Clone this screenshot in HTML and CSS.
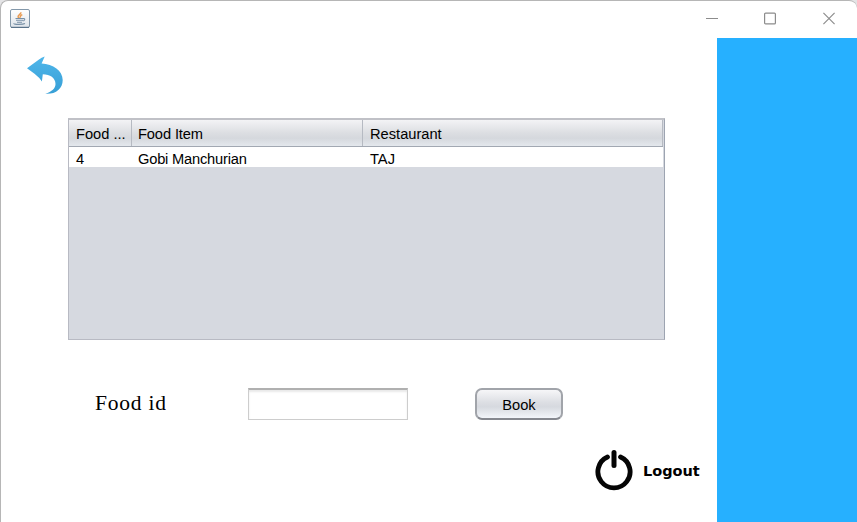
FILE: index.html
```html
<!DOCTYPE html>
<html lang="en">
<head>
<meta charset="utf-8">
<title>Food booking</title>
<link rel="stylesheet" href="styles.css">
</head>
<body>
<div class="window">
  <header class="titlebar">
    <svg class="java" width="20" height="20" viewBox="0 0 20 20">
      <defs><linearGradient id="tile" x1="0" y1="0" x2="0" y2="1"><stop offset="0" stop-color="#fff"/><stop offset="1" stop-color="#dde3e9"/></linearGradient></defs>
      <rect x=".5" y=".5" width="19" height="18" rx="1.5" fill="url(#tile)" stroke="#8398aa"/>
      <path d="M1 18.3h18" stroke="#506b82"/>
      <path d="M10.800 3.200c.8 2-3.500 2.700-2.700 4.700.2.500.8.900 1.200 1.400M12.300 5.600c-2 1-2.500 1.800-1.600 2.900" fill="none" stroke="#e99a50" stroke-width="1.500"/>
      <path d="M5.500 9.500h8M6 11.300h7M7 13.200h5M13.300 9.800c2-.7 2 1.700-.5 2.200M4 14.400c-1 1.300 9 1.300 11 .2" fill="none" stroke="#7890a6" stroke-width="1.100"/>
    </svg>
    <div class="controls">
      <svg width="12" height="13" viewBox="0 0 12 13"><path d="M0 6.500h12"/></svg>
      <svg width="12" height="13" viewBox="0 0 12 13"><rect x=".6" y="1.100" width="10.800" height="10.800" rx="1"/></svg>
      <svg width="12" height="13" viewBox="0 0 12 13"><path d="M.4.900l11.200 11.200M11.600.900L.4 12.100"/></svg>
    </div>
  </header>
  <div class="content">
    <main class="panel">
      <svg class="back" width="38" height="40" viewBox="0 0 38 40">
        <defs><linearGradient id="arrow" x1="0" y1="0" x2="0" y2="1"><stop offset="0" stop-color="#4fb6ea"/><stop offset="1" stop-color="#379fd6"/></linearGradient></defs>
        <path d="M1 12.300L13 3.600Q15.500 1.300 18.700.500L15.600 7.400C27 7.800 36.700 14.500 36.700 24C36.700 33 29.500 38.500 19.300 37.800C26 35.500 29.500 32.500 29.500 28C29.500 22 24 18.300 16.800 18.300L15.900 25.500Q13.500 21.500 8.500 17.700Z" fill="url(#arrow)"/>
      </svg>
      <section class="grid">
        <div class="row head"><span>Food ...</span><span>Food Item</span><span>Restaurant</span></div>
        <div class="row item"><span>4</span><span>Gobi Manchurian</span><span>TAJ</span></div>
      </section>
      <div class="form">
        <label for="food-id">Food id</label>
        <input id="food-id" type="text">
        <button type="button" class="book">Book</button>
      </div>
      <div class="logout">
        <svg width="38" height="42" viewBox="0 0 38 42"><path d="M12.500 8A16.100 16.100 0 1 0 25.500 8" fill="none" stroke="#050505" stroke-width="4.800" stroke-linecap="round"/><path d="M19 3.500V16.500" stroke="#050505" stroke-width="5" stroke-linecap="round"/></svg>
        <span>Logout</span>
      </div>
    </main>
    <aside class="side"></aside>
  </div>
</div>
</body>
</html>
```
FILE: styles.css
```css
* { box-sizing: border-box; }
body { margin: 0; background: #e4e4e6; overflow: hidden; font-family: "Liberation Sans", Arial, sans-serif; }
.window { width: 857px; height: 522px; border: solid #b6b6b6; border-width: 1px 0 0 1px; border-radius: 8px 8px 0 0; background: #fff; overflow: hidden; display: flex; flex-direction: column; }
.titlebar { height: 37px; flex: none; display: flex; justify-content: space-between; padding: 8px 22px 0 9px; }
.controls { display: flex; padding-top: 3px; }
.controls svg { fill: none; stroke: #8c8c8c; stroke-width: 1.200; }
.controls svg:nth-child(2) { margin: 0 47px 0 46px; }
.content { flex: 1; display: flex; }
.panel { width: 716px; display: flex; flex-direction: column; align-items: flex-start; }
.side { flex: 1; background: #26b0ff; }
.back { margin: 18px 0 0 25px; }
.grid { width: 597px; height: 222px; margin: 22px 0 0 67px; border: solid #b8bac3; border-width: 2px 1px 1px; border-top-color: #c0c1c7; border-right-color: #9da4b1; background: #d6d9e0; padding: 0 1px 0 0; font-size: 14.670px; }
.row { display: grid; grid-template-columns: 63px 231px 1fr; height: 20px; background: #fff; color: #000; }
.row span { padding-left: 7px; line-height: 24px; white-space: nowrap; }
.row span:nth-child(2) { padding-left: 6px; letter-spacing: -.12px; }
.item span:nth-child(2) { letter-spacing: -.2px; }
.head { height: 27px; border-bottom: 1px solid #a2a8b2; background: linear-gradient(#f3f3f5, #dcdee2 50%, #d5d8dd 70%, #e4e8ed); }
.head span { border-right: 1px solid #b6bac2; line-height: 29px; height: 26px; }
.form { display: flex; align-items: center; height: 32px; margin: 48px 0 0 94px; }
.form label { width: 153px; padding-bottom: 2px; font: 21.500px "Liberation Serif", serif; letter-spacing: .8px; }
.form input { width: 160px; height: 32px; border: 1px solid #cdcdcd; border-top: 2px solid #b0b0b0; background: #fff; box-shadow: inset 0 2px 2px #e9e9e9; padding: 0 6px; outline: 0; }
.book { width: 88px; height: 32px; margin-left: 67px; padding: 1px 0 0; border: 2px solid #a1a4aa; border-bottom-color: #85888f; border-radius: 7px; background: linear-gradient(#f6f6f8, #dcdee3 45%, #d6d9df 60%, #f2f5fa); font: 14.670px "Liberation Sans", sans-serif; color: #000; }
.logout { display: flex; align-items: center; margin: 29px 0 0 594px; height: 42px; gap: 10px; color: #000; font: bold 14.500px "DejaVu Sans", sans-serif; }
.logout svg { flex: none; }
.logout span { padding-top: 2px; }
```
